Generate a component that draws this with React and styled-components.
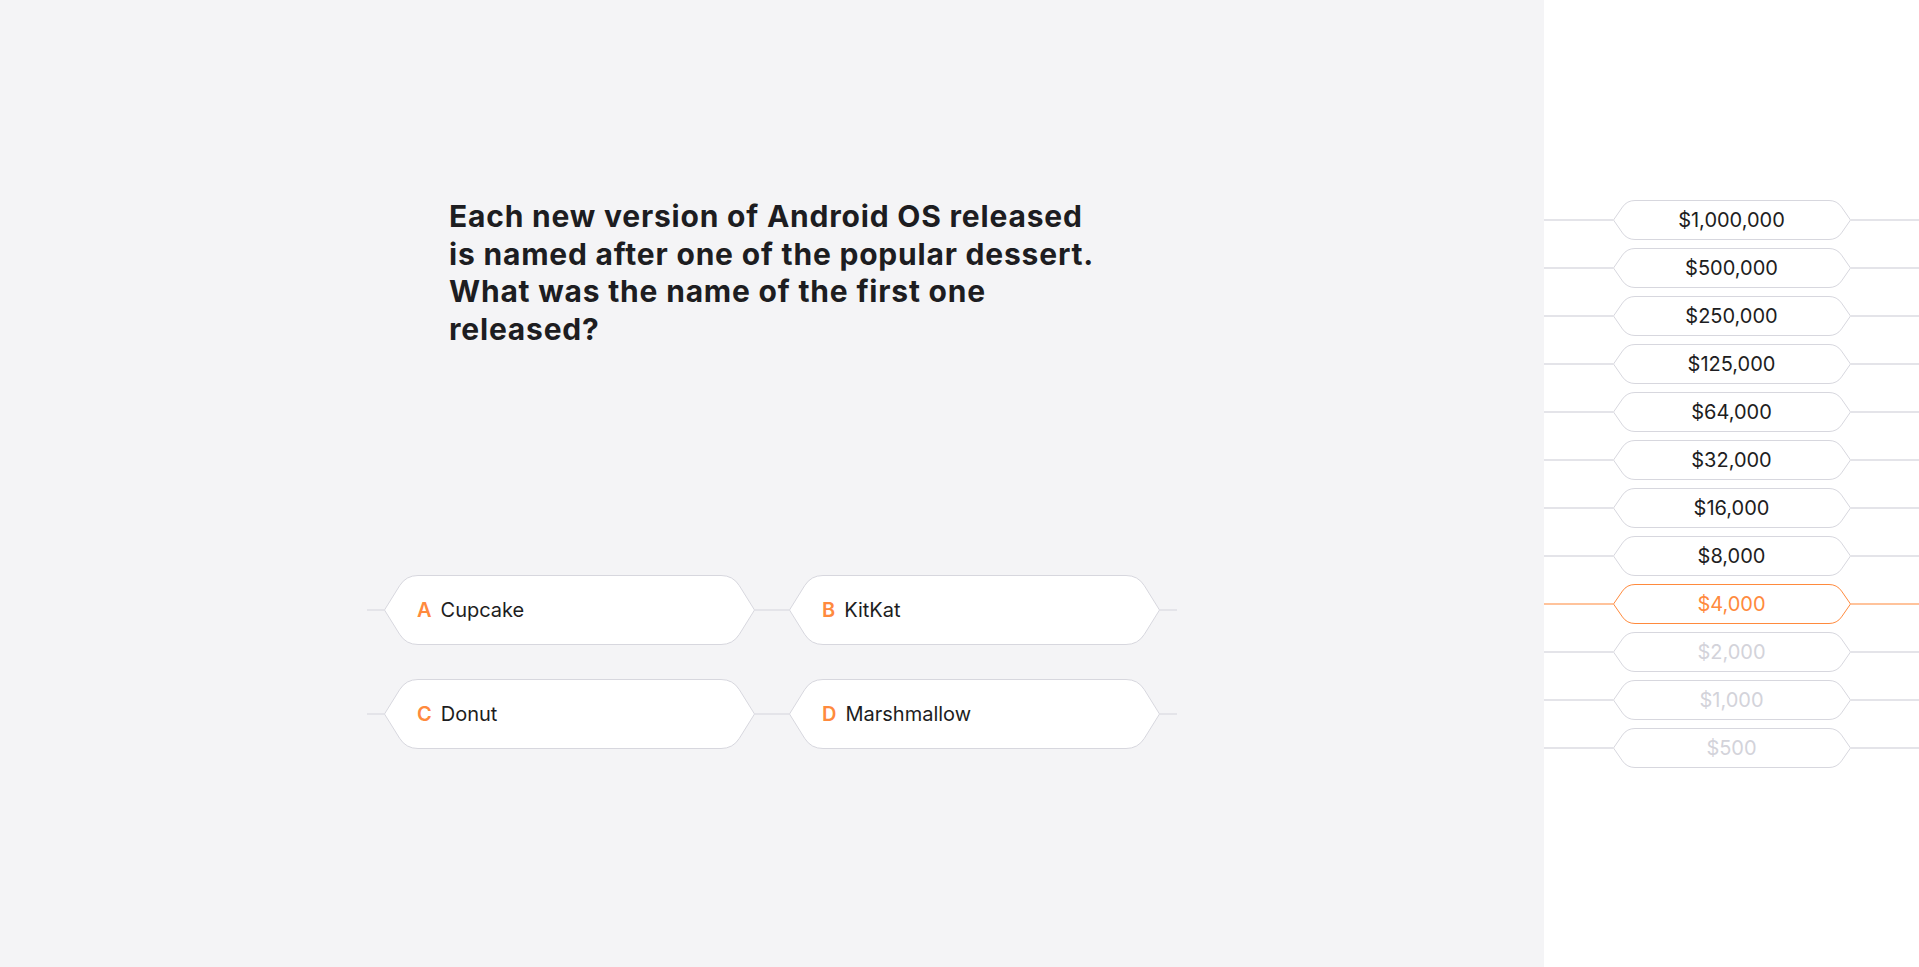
import React from 'react';
import styled, { createGlobalStyle } from 'styled-components';

const GlobalStyle = createGlobalStyle`
  html, body {
    margin: 0;
    padding: 0;
    background: #f4f4f6;
    font-family: Inter, "Noto Sans", sans-serif;
  }
`;

const question =
  'Each new version of Android OS released is named after one of the popular dessert. What was the name of the first one released?';

const answers = [
  { letter: 'A', text: 'Cupcake' },
  { letter: 'B', text: 'KitKat' },
  { letter: 'C', text: 'Donut' },
  { letter: 'D', text: 'Marshmallow' },
];

const prizes = [
  '$1,000,000',
  '$500,000',
  '$250,000',
  '$125,000',
  '$64,000',
  '$32,000',
  '$16,000',
  '$8,000',
  '$4,000',
  '$2,000',
  '$1,000',
  '$500',
];
const current = 8;

// hexagon with sharp side tips and rounded top/bottom corners
function hexPath(w, h, p, r) {
  const s = 0.5;
  const pts = [
    [s, h / 2],
    [p, s],
    [w - p, s],
    [w - s, h / 2],
    [w - p, h - s],
    [p, h - s],
  ];
  const round = [false, true, true, false, true, true];
  let d = `M ${pts[0][0]} ${pts[0][1]}`;
  for (let i = 1; i <= 6; i++) {
    const P = pts[i % 6];
    if (!round[i % 6]) {
      d += ` L ${P[0]} ${P[1]}`;
      continue;
    }
    const A = pts[i - 1];
    const B = pts[(i + 1) % 6];
    const la = Math.hypot(A[0] - P[0], A[1] - P[1]);
    const lb = Math.hypot(B[0] - P[0], B[1] - P[1]);
    const sx = P[0] + ((A[0] - P[0]) * r) / la;
    const sy = P[1] + ((A[1] - P[1]) * r) / la;
    const ex = P[0] + ((B[0] - P[0]) * r) / lb;
    const ey = P[1] + ((B[1] - P[1]) * r) / lb;
    d += ` L ${sx} ${sy} Q ${P[0]} ${P[1]} ${ex} ${ey}`;
  }
  return d + ' Z';
}

function HexFrame({ w, h, p, r, stroke }) {
  return (
    <Frame width={w} height={h} viewBox={`0 0 ${w} ${h}`}>
      <path d={hexPath(w, h, p, r)} fill="#ffffff" stroke={stroke} strokeWidth="1" />
    </Frame>
  );
}

export default function App() {
  return (
    <Page>
      <GlobalStyle />
      <Stage>
        <QuestionBox>
          <Question>{question}</Question>
        </QuestionBox>
        <Answers>
          {answers.map((a) => (
            <AnswerRow key={a.letter}>
              <Wire />
              <AnswerButton>
                <HexFrame w={371} h={70} p={22} r={12} stroke="#d7d7de" />
                <Letter>{a.letter}</Letter>
                <AnswerText>{a.text}</AnswerText>
              </AnswerButton>
              <Wire />
            </AnswerRow>
          ))}
        </Answers>
      </Stage>
      <Sidebar>
        <Ladder>
          {prizes.map((amount, i) => {
            const state = i === current ? 'active' : i > current ? 'muted' : 'normal';
            return (
              <Rung key={amount}>
                <Wire $active={state === 'active'} />
                <Prize>
                  <HexFrame
                    w={238}
                    h={40}
                    p={14}
                    r={8}
                    stroke={state === 'active' ? '#ff8a3d' : '#d7d7de'}
                  />
                  <PrizeText $state={state}>{amount}</PrizeText>
                </Prize>
                <Wire $active={state === 'active'} />
              </Rung>
            );
          })}
        </Ladder>
      </Sidebar>
    </Page>
  );
}

const Page = styled.div`
  display: flex;
  width: 100%;
  height: 967px;
  background: #f4f4f6;
`;

const Stage = styled.main`
  flex: 1;
  display: flex;
  flex-direction: column;
  align-items: center;
  padding-top: 198px;
  box-sizing: border-box;
`;

const QuestionBox = styled.div`
  width: 652px;
  height: 377px;
  padding-left: 3px;
  box-sizing: border-box;
`;

const Question = styled.h1`
  margin: 0;
  max-width: 652px;
  font-size: 30px;
  line-height: 37.5px;
  font-weight: 700;
  color: #1d1d21;
  letter-spacing: 0.8px;
`;

const Answers = styled.div`
  display: grid;
  grid-template-columns: repeat(2, 405px);
  row-gap: 34px;
`;

const AnswerRow = styled.div`
  display: flex;
  align-items: center;
`;

const Wire = styled.div`
  flex: 1;
  height: 2px;
  background: ${(p) => (p.$active ? '#ffc39b' : '#e4e4e9')};
`;

const Frame = styled.svg`
  position: absolute;
  inset: 0;
  z-index: 0;
`;

const AnswerButton = styled.div`
  position: relative;
  width: 371px;
  height: 70px;
  display: flex;
  align-items: center;
  gap: 9px;
  padding-left: 33px;
  box-sizing: border-box;
  font-size: 20px;
  color: #1d1d21;

  & > span {
    position: relative;
    z-index: 1;
  }
`;

const Letter = styled.span`
  color: #ff8a3d;
  font-weight: 600;
`;

const AnswerText = styled.span`
  font-weight: 400;
`;

const Sidebar = styled.aside`
  width: 375px;
  flex-shrink: 0;
  background: #ffffff;
  display: flex;
  align-items: center;
`;

const Ladder = styled.div`
  width: 100%;
  display: flex;
  flex-direction: column;
  gap: 8px;
`;

const Rung = styled.div`
  display: flex;
  align-items: center;
`;

const Prize = styled.div`
  position: relative;
  width: 238px;
  height: 40px;
  display: flex;
  align-items: center;
  justify-content: center;
`;

const PrizeText = styled.span`
  position: relative;
  z-index: 1;
  font-size: 20px;
  color: ${(p) =>
    p.$state === 'active' ? '#ff8a3d' : p.$state === 'muted' ? '#d3d3da' : '#1d1d21'};
`;
